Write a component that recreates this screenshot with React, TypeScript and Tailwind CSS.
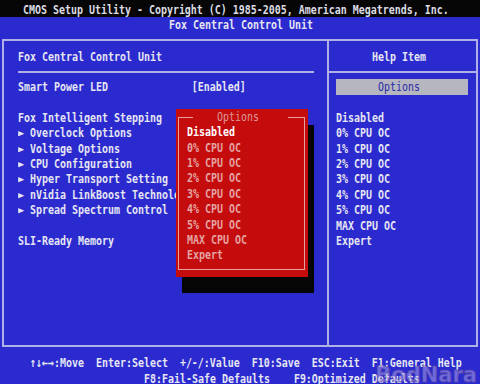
import React from "react";

function L({ t, className = "" }: { t: string; className?: string }) {
  return (
    <div className={`h-[15.36px] leading-[15.36px] whitespace-pre ${className}`}>
      <span className="inline-block origin-left scale-x-[0.766]">{t}</span>
    </div>
  );
}

const leftRows = [
  "Fox Intelligent Stepping",
  "► Overclock Options",
  "► Voltage Options",
  "► CPU Configuration",
  "► Hyper Transport Setting",
  "► nVidia LinkBoost Technology",
  "► Spread Spectrum Control",
  " ",
  "SLI-Ready Memory",
];

const opts = [
  "Disabled",
  "0% CPU OC",
  "1% CPU OC",
  "2% CPU OC",
  "3% CPU OC",
  "4% CPU OC",
  "5% CPU OC",
  "MAX CPU OC",
  "Expert",
];

export default function App() {
  return (
    <div className="relative w-[480px] h-[384px] overflow-hidden bg-[#2a2acf] text-[13px] font-bold text-[#e6e6f2] font-['DejaVu_Sans_Mono',monospace]">
      {/* title bar */}
      <div className="h-[17px] bg-[#060606] pt-[2px] pl-[23px] text-[#dcdce4]">
        <L t="CMOS Setup Utility - Copyright (C) 1985-2005, American Megatrends, Inc." />
      </div>
      <div className="pl-[169px]">
        <L t="Fox Central Control Unit" />
      </div>

      {/* main frame */}
      <div className="mt-[6.6px] ml-[2px] w-[476px] h-[308px] border-2 border-[#aeb0e6] flex">
        <div className="w-[323px] pt-[7.6px] pl-[14px]">
          <L t="Fox Central Control Unit" />
          <div className="h-[15.36px] flex items-center">
            <div className="h-[2px] w-[296px] bg-[#aeb0e6]" />
          </div>
          <L t={"Smart Power LED" + " ".repeat(14) + "[Enabled]"} />
          <L t=" " />
          {leftRows.map((r, i) => (
            <L key={i} t={r} />
          ))}
        </div>
        <div className="w-[2px] bg-[#aeb0e6]" />
        <div className="flex-1 pt-[7.6px]">
          <L t="      Help Item" className="pl-[7px]" />
          <div className="h-[15.36px] flex items-center">
            <div className="h-[2px] w-full bg-[#aeb0e6]" />
          </div>
          <div className="h-[15.36px] pl-[7px] pr-[8px]">
            <div className="h-full bg-[#b6b6c0] text-[#2a2aa8] font-normal">
              <L t="       Options" />
            </div>
          </div>
          <L t=" " />
          {opts.map((o, i) => (
            <L key={i} t={o} className="pl-[7px]" />
          ))}
        </div>
      </div>

      {/* footer */}
      <div className="mt-[8.5px] pl-[30px]">
        <L t="↑↓←→:Move  Enter:Select  +/-/:Value  F10:Save  ESC:Exit  F1:General Help" />
      </div>
      <div className="pl-[144px]">
        <L t="F8:Fail-Safe Defaults    F9:Optimized Defaults" />
      </div>

      {/* popup */}
      <div className="absolute left-[176px] top-[109px] w-[132px] h-[168px] bg-[#c40c0c] shadow-[6px_16px_0_0_#050505]">
        <div className="absolute left-[1.5px] top-[8px] right-[3px] bottom-[7px] border border-[#e2a2a2]" />
        <div className="absolute left-[17px] top-0 w-[95px] bg-[#c40c0c] pl-[24px] text-[#dc9a9a] font-normal">
          <L t="Options" />
        </div>
        <div className="absolute left-[11px] top-[15.36px]">
          {opts.map((o, i) => (
            <L key={i} t={o} className={i === 0 ? "text-white" : "text-[#e4a4a4]"} />
          ))}
        </div>
      </div>

      {/* watermark */}
      <div className="absolute right-[3px] bottom-[-3px] text-[21px] leading-[24px] font-bold font-['DejaVu_Sans',sans-serif] text-[rgba(200,190,240,0.45)] [-webkit-text-stroke:1px_rgba(90,70,160,0.7)]">
        BodNara
      </div>
    </div>
  );
}
